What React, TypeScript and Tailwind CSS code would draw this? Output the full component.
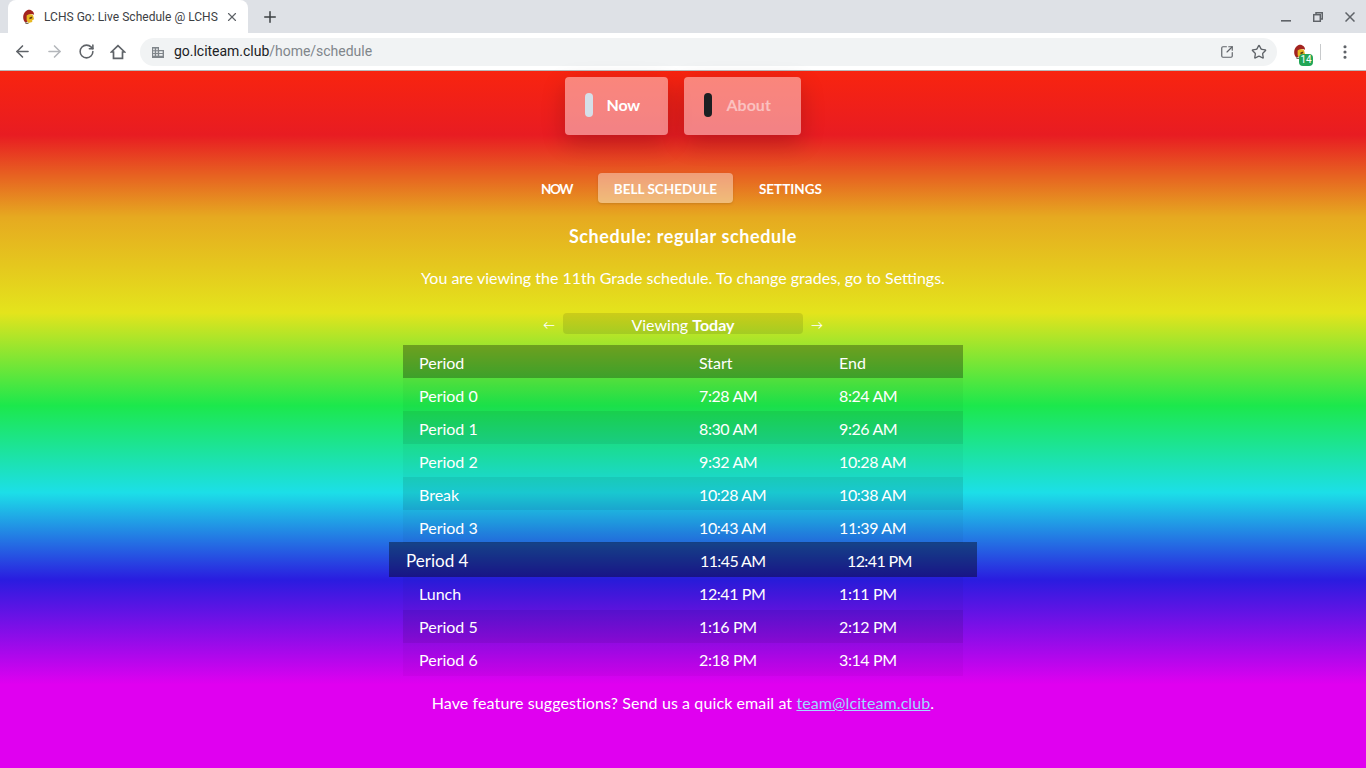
import { ArrowLeft, ArrowRight, RotateCw, Star, Plus, X, EllipsisVertical, SquareArrowOutUpRight } from "lucide-react";
const R=[["Period 0","7:28 AM","8:24 AM",0],["Period 1","8:30 AM","9:26 AM",1],["Period 2","9:32 AM","10:28 AM",0],["Break","10:28 AM","10:38 AM",1],["Period 3","10:43 AM","11:39 AM",0]] as const;
const L=[["Lunch","12:41 PM","1:11 PM",0],["Period 5","1:16 PM","2:12 PM",1],["Period 6","2:18 PM","3:14 PM",0]] as const;
function Row({r,top=false}:{r:readonly [string,string,string,number];top?:boolean}){return <div className={`flex h-[33px] items-center pl-4 text-[16px] ${top?"pt-[2px]":""} ${r[3]?"bg-black/10":"bg-black/[0.03]"}`}><span className="w-[280px]">{r[0]}</span><span className="w-[140px] tracking-[-0.4px]">{r[1]}</span><span className="tracking-[-0.4px]">{r[2]}</span></div>}
function Helmet(){return <svg viewBox="0 0 14 16" className="h-[15px] w-[13px]"><path d="M3 14C0 10 1 3 6 1c4-1 7 2 7 5-2-1-4-1-5 0l-2 3v5z" fill="#a3231f"/><path d="M5 7c2-2 6-2 7 0l1 4-2 1v2l-4 1-2-3z" fill="#e8b923"/><path d="M8 9l3-1v2l-3 1z" fill="#5a3a12"/><path d="M3 14l4 1v1H4z" fill="#7a6a5a"/></svg>}
function Btn({children,className=""}:{children:React.ReactNode;className?:string}){return <span className={`flex h-8 w-8 shrink-0 items-center justify-center ${className}`}>{children}</span>}
export default function App(){return <div className="h-[768px] w-[1366px] overflow-hidden font-['Roboto',sans-serif]">
<div className="h-[71px] border-b border-[#b8b8b8] bg-white">
<div className="flex h-[33px] items-center bg-[#dee1e6]">
<div className="ml-2 flex h-[33px] w-[240px] items-center rounded-t-lg bg-white pl-[14px] pr-[9px] text-[12px] tracking-[0.02px] text-[#3c4043]"><Helmet/><span className="ml-[9px]">LCHS Go: Live Schedule @ LCHS</span><X className="ml-auto h-[14px] w-[14px] text-[#5f6368]" strokeWidth={2}/></div>
<Btn className="ml-[6px]"><Plus className="h-[18px] w-[18px] text-[#3c4043]" strokeWidth={2}/></Btn>
<div className="ml-auto flex text-[#5f6368]">
<Btn><svg viewBox="0 0 10 10" className="h-[10px] w-[10px]"><rect x="0" y="8" width="10" height="1.6" fill="currentColor"/></svg></Btn>
<Btn><svg viewBox="0 0 10 10" className="h-[10px] w-[10px]" fill="none" stroke="currentColor" strokeWidth="1.5"><rect x="0.7" y="2.7" width="6.6" height="6.6"/><path d="M3 2.5V.7h6.3V7H7.5"/></svg></Btn>
<Btn><svg viewBox="0 0 10 10" className="h-[10px] w-[10px]" stroke="currentColor" strokeWidth="1.5"><path d="M.5.5l9 9M9.5.5l-9 9"/></svg></Btn>
</div></div>
<div className="flex h-[37px] items-center text-[#5f6368]">
<Btn className="ml-[6px]"><ArrowLeft className="h-[19px] w-[19px]" strokeWidth={2}/></Btn>
<Btn><ArrowRight className="h-[19px] w-[19px] text-[#b4b7bb]" strokeWidth={2}/></Btn>
<Btn><RotateCw className="h-[17px] w-[17px]" strokeWidth={2.2}/></Btn>
<Btn><svg viewBox="0 0 16 16" className="h-4 w-4" fill="none" stroke="currentColor" strokeWidth="1.7" strokeLinejoin="miter"><path d="M8 1.6L1.4 8H3.5v6.3h9V8h2.1z"/></svg></Btn>
<div className="ml-[6px] flex h-7 w-[1137px] items-center rounded-full bg-[#f1f3f4] pl-[10px] pr-[2px] text-[14px] text-[#202124]">
<svg viewBox="0 0 16 16" className="mr-2 h-4 w-4" fill="#80868b"><path d="M2 3h7v3h5v8H2zM3.2 4.5v1.7h1.5V4.5zm3 0v1.7h1.5V4.5zM3.2 7.2v1.7h1.5V7.2zm3 0v1.7h1.5V7.2zm3 0v1.7h3.4V7.2zM3.2 10v1.7h1.5V10zm3 0v1.7h1.5V10zm3 0v1.7h3.4V10z" fillRule="evenodd"/></svg>
<span className="tracking-[-0.02px]">go.lciteam.club<span className="text-[#80868b]">/home/schedule</span></span>
<Btn className="ml-auto h-7 text-[#5f6368]"><SquareArrowOutUpRight className="h-[14px] w-[14px]" strokeWidth={2}/></Btn>
<Btn className="h-7 text-[#5f6368]"><Star className="h-4 w-4" strokeWidth={2}/></Btn>
</div>
<Btn className="relative ml-[6px]"><Helmet/><span className="absolute left-4 top-[18px] flex h-3 w-[14px] items-center justify-center rounded-sm bg-[#21a656] text-[10px] leading-none text-white">14</span></Btn>
<span className="ml-[5px] h-4 w-px bg-[#c8cacc]"/>
<Btn className="ml-[8px]"><EllipsisVertical className="h-[18px] w-[18px]" strokeWidth={2.2}/></Btn>
</div></div>
<div className="h-[697px] bg-[linear-gradient(180deg,#f8240f_0%,#e81c22_9.2%,#e6aa20_21%,#e4e41c_34.7%,#1ce84c_48%,#1cdfe8_60.5%,#2a1ce0_73%,#e000f0_88%,#e000f0_100%)] font-['Lato',sans-serif] text-white">
<div className="flex justify-center gap-4 pr-[1px] pt-[6px]"><div className="flex h-[58px] w-[103px] items-center rounded bg-white/45 pb-[2px] pl-5 font-bold shadow-[0_8px_24px_rgba(0,0,0,0.2)]"><span className="mr-[14px] h-6 w-2 rounded-full bg-[#d5dfe8]"/><span className="tracking-[-0.2px]">Now</span></div><div className="flex h-[58px] w-[117px] items-center rounded bg-white/45 pb-[2px] pl-5 font-bold text-white/50 shadow-[0_8px_24px_rgba(0,0,0,0.2)]"><span className="mr-[15px] h-6 w-2 rounded-full bg-[#1b1f22]"/>About</div></div>
<div className="mt-[38px] flex items-center justify-center gap-[26px] pr-[3px] text-[13.5px] font-bold"><span className="pt-[2px] tracking-[-1.5px]">NOW</span><span className="flex h-[30px] w-[135px] items-center justify-center rounded-sm bg-white/40 pt-[2px] shadow">BELL SCHEDULE</span><span className="pt-[2px]">SETTINGS</span></div>
<div className="mt-5 text-center text-[18px] font-bold tracking-[0.6px]">Schedule: regular schedule</div>
<div className="mt-4 text-center text-[16px]">You are viewing the 11th Grade schedule. To change grades, go to Settings.</div>
<div className="mt-[22px] flex items-center justify-center gap-2 text-[16px]"><span className="pt-1 text-[12px]">←</span><div className="h-[21px] w-[240px] rounded bg-black/10 text-center leading-[23px]">Viewing <b>Today</b></div><span className="pt-1 text-[12px]">→</span></div>
<div className="mx-auto mt-[11px] w-[560px]"><div className="flex h-[33px] items-center bg-black/30 pl-4 pt-[2px]"><span className="w-[280px]">Period</span><span className="w-[140px]">Start</span><span>End</span></div>{R.map(r=><Row key={r[0]} r={r} top/>)}<div className="relative z-10 -mx-[14px] -mt-px flex h-[35px] items-center bg-black/40 pl-[17px] pt-[2px] text-[17px]"><span className="w-[294px]">Period 4</span><span className="w-[147px] text-[16px] tracking-[-0.6px]">11:45 AM</span><span className="text-[16px] tracking-[-0.6px]">12:41 PM</span></div>{L.map(r=><Row key={r[0]} r={r}/>)}</div>
<div className="mt-[15px] text-center tracking-[0.1px]">Have feature suggestions? Send us a quick email at <u className="text-[#a0d8ff]">team@lciteam.club</u>.</div>
</div></div>}
